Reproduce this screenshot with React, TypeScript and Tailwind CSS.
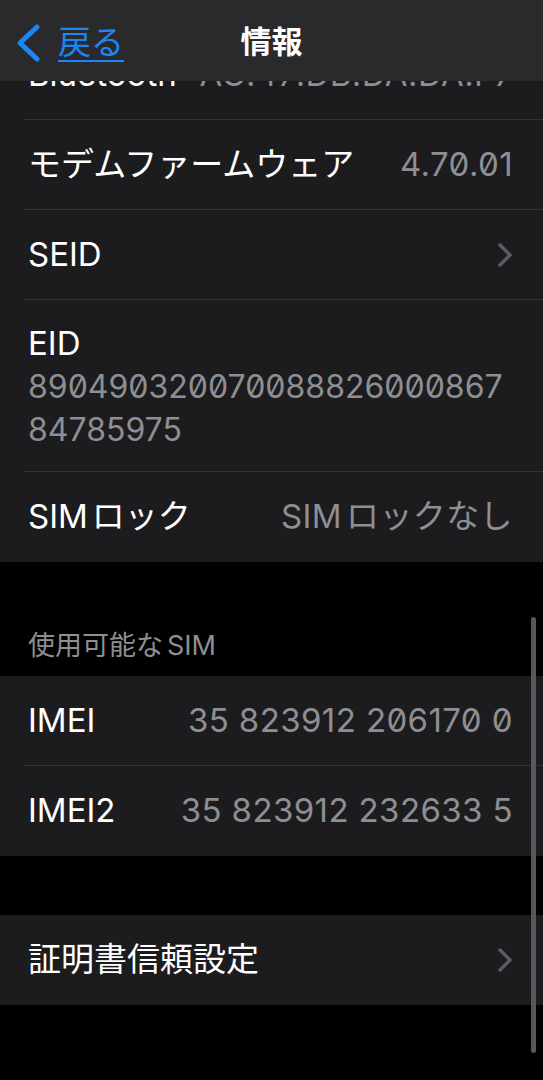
import type { ReactNode } from "react"

const font = "font-['Inter','Noto_Sans_CJK_JP',sans-serif]"

function Chevron() {
    return (
        <svg width="16" height="26" viewBox="0 0 16 26" fill="none">
            <path
                d="M3 3 L13 13 L3 23"
                stroke="#5b5b60"
                strokeWidth="3.5"
                strokeLinecap="round"
                strokeLinejoin="round"
            />
        </svg>
    )
}

type RowProps = {
    label: ReactNode
    value?: ReactNode
    chevron?: boolean
    last?: boolean
}

function Row({ label, value, chevron, last }: RowProps) {
    return (
        <div className="pl-6">
            <div
                className={`flex h-[90px] items-center justify-between pl-1 pr-[30px] ${
                    last ? "" : "border-b border-[#333335]"
                }`}
            >
                <span className="text-[33px] text-white">{label}</span>
                {value && (
                    <span className="text-[33px] tracking-[0.4px] text-[#8e8e93] [font-feature-settings:'zero']">
                        {value}
                    </span>
                )}
                {chevron && <Chevron />}
            </div>
        </div>
    )
}

function App() {
    return (
        <div
            className={`relative h-[1080px] w-[543px] overflow-hidden bg-black ${font}`}
        >
            {/* nav bar sits over the scrolled list */}
            <header className="absolute inset-x-0 top-0 z-10 grid h-[81px] grid-cols-[1fr_auto_1fr] items-center bg-[#2a2a2c] pt-1">
                <div className="flex items-center gap-[17px] pl-4">
                    <svg width="25" height="38" viewBox="0 0 25 38" fill="none">
                        <path
                            d="M21 3 L4 19 L21 35"
                            stroke="#1a86f7"
                            strokeWidth="5"
                            strokeLinecap="round"
                            strokeLinejoin="round"
                        />
                    </svg>
                    <span className="text-[33px] leading-none text-[#1a86f7] underline decoration-2 underline-offset-[6px]">
                        戻る
                    </span>
                </div>
                <h1 className="text-[31px] font-bold text-white">情報</h1>
                <div />
            </header>

            <div className="pt-[30px]">
                <section className="bg-[#1c1c1e]">
                    <Row label="Bluetooth" value="AC:47:DB:DA:DA:F7" />
                    <Row label="モデムファームウェア" value="4.70.01" />
                    <Row label="SEID" chevron />
                    <div className="pl-6">
                        <div className="border-b border-[#333335] pb-[20px] pl-1 pr-[30px] pt-[22px] text-[32px] leading-[43px]">
                            <div className="text-[33px] text-white">EID</div>
                            <div className="text-[#8e8e93] [font-feature-settings:'zero']">
                                <div>890490320070088826000867</div>
                                <div>84785975</div>
                            </div>
                        </div>
                    </div>
                    <Row
                        label={
                            <>
                                SIM<span className="ml-1">ロック</span>
                            </>
                        }
                        value={
                            <>
                                SIM<span className="ml-1">ロックなし</span>
                            </>
                        }
                        last
                    />
                </section>

                <div className="flex h-[114px] items-end px-7 pb-3">
                    <span className="text-[27px] leading-[36px] text-[#8e8e93]">
                        使用可能な<span className="ml-1">SIM</span>
                    </span>
                </div>

                <section className="bg-[#1c1c1e]">
                    <Row label="IMEI" value="35 823912 206170 0" />
                    <Row label="IMEI2" value="35 823912 232633 5" last />
                </section>

                <div className="h-[59px]" />

                <section className="bg-[#1c1c1e]">
                    <Row label="証明書信頼設定" chevron last />
                </section>
            </div>

            {/* scroll indicator */}
            <div className="absolute right-[7px] top-[617px] h-[436px] w-[5px] rounded-full bg-[#58585c]" />
        </div>
    )
}

export default App
